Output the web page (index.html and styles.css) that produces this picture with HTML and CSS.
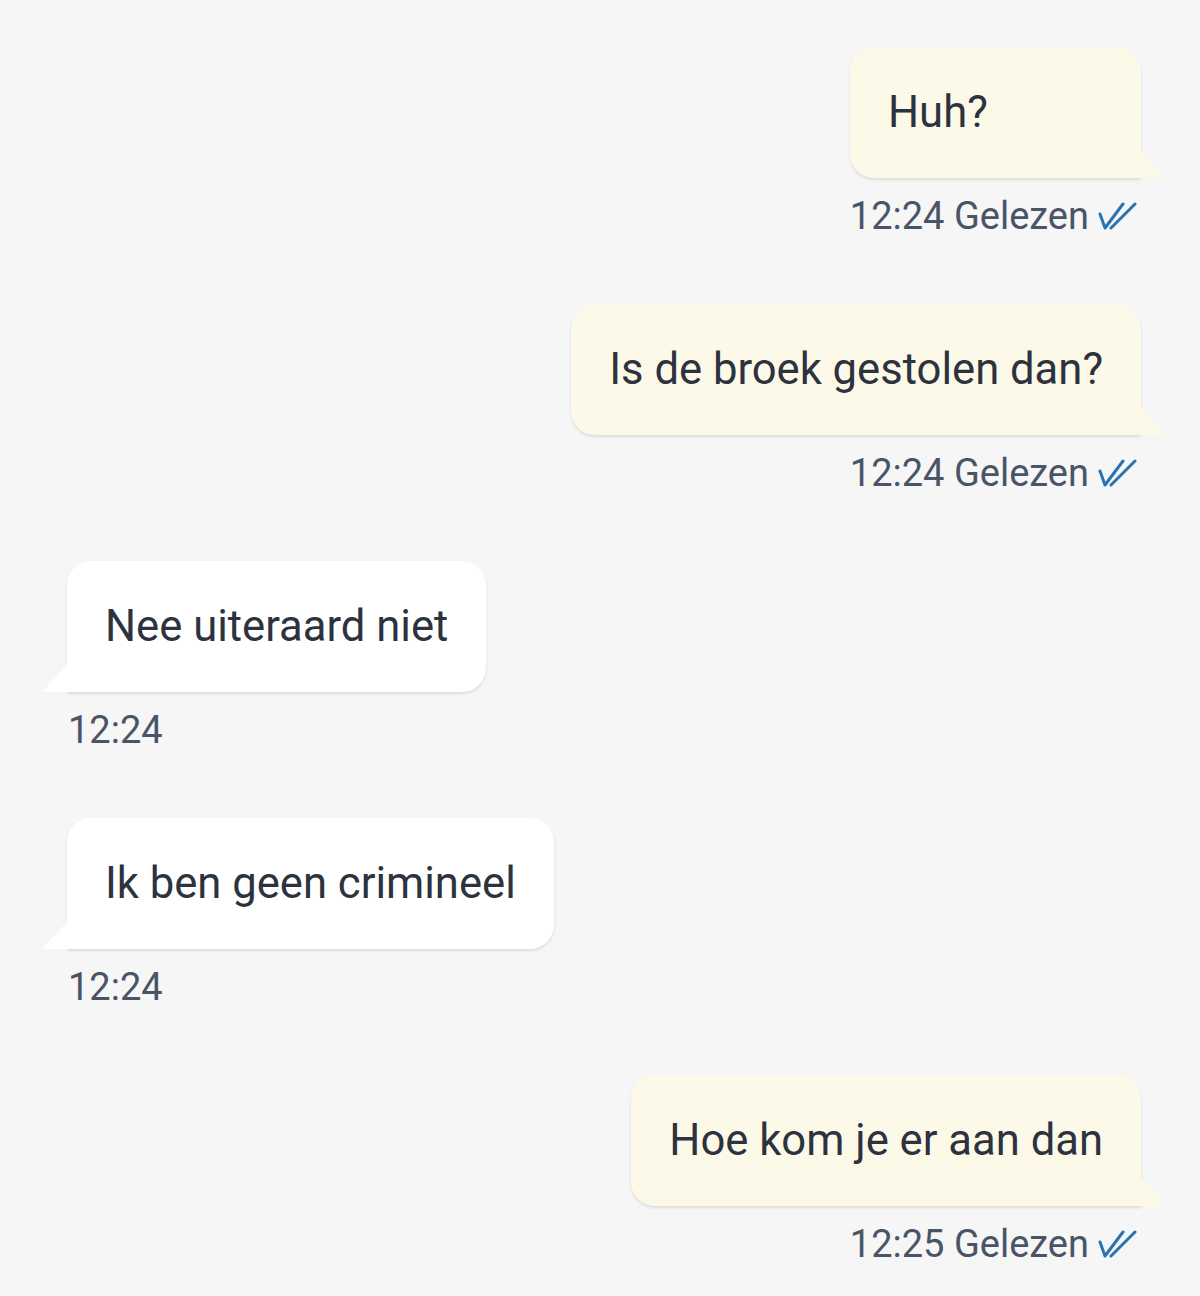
FILE: index.html
```html
<!DOCTYPE html>
<html>
<head>
<meta charset="utf-8">
<link rel="stylesheet" href="styles.css">
</head>
<body>
<div class="chat">
  <div class="msg out">
    <div class="bubble">Huh?</div>
    <div class="meta">12:24 Gelezen <svg class="check" viewBox="0 0 40 30" width="40" height="30"><path d="M3 13 L8 27 L26 3 M14 27 L38 3" fill="none" stroke="#2a73b0" stroke-width="3" stroke-linecap="round" stroke-linejoin="round"/></svg></div>
  </div>
  <div class="msg out">
    <div class="bubble">Is de broek gestolen dan?</div>
    <div class="meta">12:24 Gelezen <svg class="check" viewBox="0 0 40 30" width="40" height="30"><path d="M3 13 L8 27 L26 3 M14 27 L38 3" fill="none" stroke="#2a73b0" stroke-width="3" stroke-linecap="round" stroke-linejoin="round"/></svg></div>
  </div>
  <div class="msg in">
    <div class="bubble">Nee uiteraard niet</div>
    <div class="meta">12:24</div>
  </div>
  <div class="msg in">
    <div class="bubble">Ik ben geen crimineel</div>
    <div class="meta">12:24</div>
  </div>
  <div class="msg out">
    <div class="bubble">Hoe kom je er aan dan</div>
    <div class="meta">12:25 Gelezen <svg class="check" viewBox="0 0 40 30" width="40" height="30"><path d="M3 13 L8 27 L26 3 M14 27 L38 3" fill="none" stroke="#2a73b0" stroke-width="3" stroke-linecap="round" stroke-linejoin="round"/></svg></div>
  </div>
</div>
</body>
</html>
```
FILE: styles.css
```css
html, body {
  margin: 0;
  padding: 0;
  background: #f6f6f6;
}
body {
  font-family: Roboto, "Liberation Sans", sans-serif;
}
.chat {
  display: flex;
  flex-direction: column;
  gap: 68px;
  padding: 47px 59px 0 67px;
}
.msg {
  display: flex;
  flex-direction: column;
}
.msg.out { align-items: flex-end; }
.msg.in { align-items: flex-start; }
.bubble {
  position: relative;
  box-sizing: border-box;
  height: 131px;
  min-width: 291px;
  padding: 0 38px;
  display: flex;
  align-items: center;
  font-size: 43.6px;
  color: #2c323e;
  border-radius: 24px;
  box-shadow: 0 2px 3px rgba(0,0,0,0.10);
}
.out .bubble {
  background: #fdf9e8;
  border-bottom-right-radius: 0;
}
.in .bubble {
  background: #ffffff;
  border-bottom-left-radius: 0;
}
.bubble::after {
  content: "";
  position: absolute;
  bottom: 0;
  width: 26px;
  height: 28px;
}
.out .bubble::after {
  right: -25px;
  background: #fdf9e8;
  clip-path: polygon(0 0, 100% 100%, 0 100%);
}
.in .bubble::after {
  left: -25px;
  background: #ffffff;
  clip-path: polygon(100% 0, 100% 100%, 0 100%);
}
.meta {
  display: flex;
  align-items: center;
  gap: 12px;
  margin-top: 18px;
  height: 40px;
  font-size: 38px;
  color: #4a5467;
}
.out .meta { margin-right: 4px; }
.in .meta { margin-left: 1px; }
.check { display: block; margin-left: -4px; }
```
